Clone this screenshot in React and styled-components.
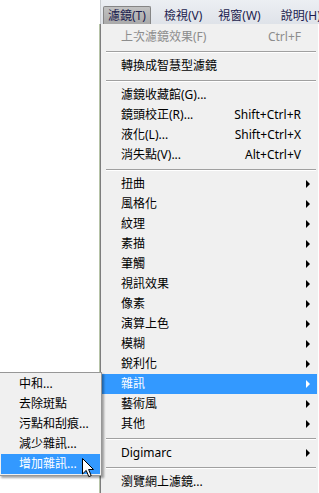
import styled, { createGlobalStyle } from 'styled-components';

const GlobalStyle = createGlobalStyle`
  html, body { margin: 0; padding: 0; background: #fff; }
  body {
    font-family: "Noto Sans", "Noto Sans CJK TC", sans-serif;
    font-size: 12px;
  }
`;

const Screen = styled.div`
  width: 319px;
  height: 493px;
  overflow: hidden;
  box-sizing: border-box;
  padding-left: 100px;
  display: flex;
  flex-direction: column;
`;

const MenuBar = styled.div`
  height: 24px;
  flex: none;
  display: flex;
  align-items: flex-end;
  padding-left: 2px;
  background: linear-gradient(#eceff3, #dfe3e9);
  border-left: 1px solid #c9ccd0;
  white-space: nowrap;
`;

const MenuTitle = styled.div`
  height: 18px;
  line-height: 17px;
  box-sizing: border-box;
  padding: 0 ${(p) => (p.$active ? '4px' : '6px')};
  margin-right: ${(p) => p.$gap || 0}px;
  color: #1c1c4e;
  border: 1px solid ${(p) => (p.$active ? '#858585' : 'transparent')};
  border-bottom: none;
  border-radius: 2px 2px 0 0;
  background: ${(p) => (p.$active ? 'linear-gradient(#c2c2c2, #a9a9a9)' : 'transparent')};
`;

const Panel = styled.div`
  flex: 1;
  width: 218px;
  box-sizing: border-box;
  background: #f0f0f0;
  border-left: 1px solid #7d7d7d;
  box-shadow: -1px 0 0 #b7c4a8;
  padding: 3px 1px 0 1px;
  display: flex;
  flex-direction: column;
`;

const Item = styled.div`
  position: relative;
  flex: none;
  height: 20px;
  line-height: 20px;
  display: grid;
  grid-template-columns: 1fr auto 16px;
  padding-left: 19px;
  white-space: nowrap;
  color: ${(p) => (p.$disabled ? '#8d8d8d' : p.$hot ? '#fff' : '#000')};
  background: ${(p) => (p.$hot ? '#3399ff' : 'transparent')};
`;

const Shortcut = styled.span`
  text-align: right;
`;

const Arrow = styled.span`
  align-self: center;
  justify-self: end;
  margin-right: 7px;
  width: 0;
  height: 0;
  border-top: 4px solid transparent;
  border-bottom: 4px solid transparent;
  border-left: 4px solid ${(p) => (p.$hot ? '#fff' : '#000')};
`;

const Separator = styled.div`
  flex: none;
  height: 0;
  margin: 4px 1px 3px 4px;
  border-top: 1px solid #a0a0a0;
  border-bottom: 1px solid #fff;
`;

const SubMenu = styled.div`
  position: absolute;
  top: -2px;
  right: 100%;
  width: 103px;
  box-sizing: border-box;
  background: #f0f0f0;
  border: 1px solid #979797;
  border-left: none;
  padding: 1px 1px 1px 2px;
  box-shadow: 2px 2px 2px rgba(0, 0, 0, 0.35);
  z-index: 2;
`;

const SubItem = styled.div`
  position: relative;
  height: 20px;
  line-height: 20px;
  padding-left: 18px;
  white-space: nowrap;
  color: ${(p) => (p.$hot ? '#fff' : '#000')};
  background: ${(p) => (p.$hot ? '#3399ff' : 'transparent')};
`;

const Cursor = styled.svg`
  position: absolute;
  left: 81px;
  top: 4px;
  z-index: 3;
`;

const submenuItems = ['扭曲', '風格化', '紋理', '素描', '筆觸', '視訊效果', '像素', '演算上色', '模糊', '銳利化'];

const noiseItems = ['中和...', '去除斑點', '污點和刮痕...', '減少雜訊...', '增加雜訊...'];

const Pointer = () => (
  <Cursor width="13" height="20" viewBox="0 0 13 20">
    <path
      d="M0.5 0.5 L0.5 16 L4.2 12.4 L6.8 18.6 L9.2 17.6 L6.6 11.5 L11.5 11.5 Z"
      fill="#fff"
      stroke="#000"
      strokeWidth="1"
      strokeLinejoin="miter"
    />
  </Cursor>
);

const App = () => {
  return (
    <>
      <GlobalStyle />
      <Screen>
        <MenuBar>
          <MenuTitle $active $gap={6}>濾鏡(T)</MenuTitle>
          <MenuTitle $gap={2}>檢視(V)</MenuTitle>
          <MenuTitle $gap={6}>視窗(W)</MenuTitle>
          <MenuTitle>說明(H)</MenuTitle>
        </MenuBar>
        <Panel>
          <Item $disabled>
            <span>上次濾鏡效果(F)</span>
            <Shortcut>Ctrl+F</Shortcut>
            <span />
          </Item>
          <Separator />
          <Item>
            <span>轉換成智慧型濾鏡</span>
          </Item>
          <Separator />
          <Item>
            <span>濾鏡收藏館(G)...</span>
          </Item>
          <Item>
            <span>鏡頭校正(R)...</span>
            <Shortcut>Shift+Ctrl+R</Shortcut>
            <span />
          </Item>
          <Item>
            <span>液化(L)...</span>
            <Shortcut>Shift+Ctrl+X</Shortcut>
            <span />
          </Item>
          <Item>
            <span>消失點(V)...</span>
            <Shortcut>Alt+Ctrl+V</Shortcut>
            <span />
          </Item>
          <Separator />
          {submenuItems.map((label) => (
            <Item key={label}>
              <span>{label}</span>
              <span />
              <Arrow />
            </Item>
          ))}
          <Item $hot>
            <span>雜訊</span>
            <span />
            <Arrow $hot />
            <SubMenu>
              {noiseItems.map((label, i) => (
                <SubItem key={label} $hot={i === noiseItems.length - 1}>
                  {label}
                  {i === noiseItems.length - 1 && <Pointer />}
                </SubItem>
              ))}
            </SubMenu>
          </Item>
          <Item>
            <span>藝術風</span>
            <span />
            <Arrow />
          </Item>
          <Item>
            <span>其他</span>
            <span />
            <Arrow />
          </Item>
          <Separator />
          <Item>
            <span>Digimarc</span>
            <span />
            <Arrow />
          </Item>
          <Separator />
          <Item>
            <span>瀏覽網上濾鏡...</span>
          </Item>
        </Panel>
      </Screen>
    </>
  );
};

export default App;
